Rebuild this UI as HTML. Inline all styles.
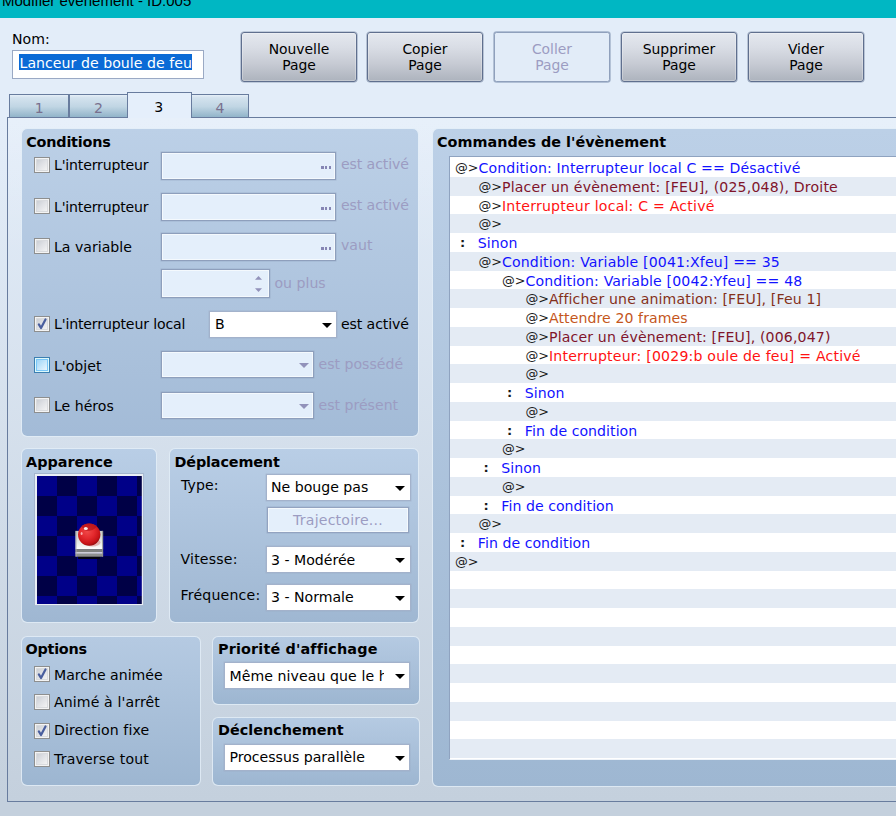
<!DOCTYPE html>
<html lang="fr">
<head>
<meta charset="utf-8">
<title>Modifier évènement - ID:005</title>
<style>
*{box-sizing:border-box;margin:0;padding:0}
html,body{width:896px;height:816px;overflow:hidden}
body{position:relative;font-family:"DejaVu Sans","Liberation Sans",sans-serif;font-size:14.1px;color:#000;
 background:linear-gradient(to bottom,#e3edf9 0px,#e3edf9 120px,#c4d0dd 800px,#c4d0dd 816px);}
.abs{position:absolute}
.t{position:absolute;white-space:nowrap;line-height:16px;height:16px}
.b{font-weight:bold;font-size:14.4px}
.dis{color:#9c9cc2}
#title{left:0;top:0;width:896px;height:17.5px;background:#00b7c3;overflow:hidden}
#title span{position:absolute;left:2px;top:-7.6px;font-family:"Liberation Sans",sans-serif;font-size:15px;line-height:18px;color:#000;white-space:nowrap}
/* name input */
#name{left:12px;top:50px;width:192px;height:29px;background:#fff;border:1px solid #9aa9c4}
#sel{left:19px;top:54px;width:173.4px;height:16px;background:#0a6ad6}
/* buttons */
.btn{position:absolute;top:32px;width:116px;height:50px;border:1px solid #5f6f8e;border-radius:3px;box-shadow:0 0 0 .6px rgba(95,111,142,.55),inset 0 0 0 1px rgba(255,255,255,.28);font-size:13.9px;
 background:linear-gradient(to bottom,#e4e8ef 0%,#d9dde5 30%,#c6cad3 65%,#adb3bd 100%);text-align:center;line-height:16.5px;padding-top:7.6px}
.btn.off{background:#e2ecf8;border-color:#8fa0bc;color:#9c9cc2;box-shadow:0 0 0 .7px rgba(143,160,188,.8);border-radius:2.5px}
/* tabs */
.tab{position:absolute;top:94.1px;height:23.5px;border:1.5px solid #687c9e;border-bottom:none;
 background:linear-gradient(to bottom,#e6eff8 0%,#d3e2ee 12%,#c1d6e4 50%,#8db1c7 100%);text-align:center;line-height:20px;color:#78708e;padding-top:2.7px}
.tab.on{top:91.9px;height:26.6px;background:#e5effb;color:#000;padding-top:4.1px;z-index:3;border-width:1.3px}
#panel{left:7px;top:116.9px;width:910px;height:685.5px;border:1.25px solid #687c9e;z-index:2;
 background:linear-gradient(to bottom,rgba(255,255,255,.16) 0,rgba(255,255,255,0) 140px)}
/* group boxes */
.grp{position:absolute;border-radius:6px;background:linear-gradient(to bottom,var(--a,#bcd0e7),var(--b,#9fb7d2));background-clip:padding-box;border:1.25px solid rgba(226,237,248,.8);z-index:4}
.g2{--a:#b9cee6;--b:#9fb7d2}.g3{--a:#b5cae2;--b:#9db6d1}.g1{--a:#bcd0e7;--b:#a3bbd7}.g4{--a:#bcd0e7;--b:#9eb7d2}
.z{z-index:5}
/* fields */
.fld{position:absolute;background:#e4effb;border:1px solid #8e9fbc;box-shadow:0 0 0 .5px rgba(142,159,188,.5),inset 0 0 0 1px rgba(255,255,255,.6);z-index:5}
.fld.w{background:#fff;border-color:#a3b2cb;box-shadow:0 0 0 .5px rgba(150,166,193,.4)}
.arr{position:absolute;width:0;height:0;border-left:5px solid transparent;border-right:5px solid transparent;border-top:5.5px solid #000}
.arr.d{border-top-color:#9292ba}
.dots{position:absolute;width:10px;height:2.5px}
.dots i{position:absolute;top:0;width:2.5px;height:2.5px;background:#8686b4}
/* checkboxes */
.cb{position:absolute;width:16.25px;height:16.25px;border:1.25px solid #8e8f8f;background:#f4f4f4;z-index:5}
.cb:before{content:"";position:absolute;left:1.25px;top:1.25px;right:1.25px;bottom:1.25px;
 background:linear-gradient(135deg,#cbcfd5 0%,#dfe1e5 45%,#f3f3f3 100%);border:1px solid #d9dbde}
.cb.hot{border-color:#3c7fb1;background:#def9fa}
.cb.hot:before{background:linear-gradient(135deg,#9fd5f7 0%,#c4e6fb 50%,#e9f6fe 100%);border-color:#79c6f9}
.cb svg{position:absolute;left:0;top:0;width:13.75px;height:13.75px}
/* list */
#list{left:449px;top:156px;width:460px;height:604px;background:#fff;border:1px solid #8fa3c0;border-bottom-color:#eef3f9;overflow:hidden;z-index:5}
.r{position:absolute;left:0;width:460px;height:18.75px;white-space:nowrap;line-height:18.75px}
.r.s{background:#e4ebf4}
.r span{position:absolute;top:1px}
.c0{color:#1a1a1a}.at{font-size:12.8px}.r .b{font-size:13px}.blue{color:#1212ff}.mar{color:#80142a}.mar2{color:#84301a}.red{color:#ff1212}.org{color:#c4561c}
</style>
</head>
<body>
<div id="title" class="abs"><span>Modifier évènement - ID:005</span></div>

<div class="t" style="left:12px;top:30.5px">Nom:</div>
<div id="name" class="abs"></div>
<div id="sel" class="abs"></div>
<div class="t" style="left:19.5px;top:54.8px;color:#fff;letter-spacing:.05px">Lanceur de boule de feu</div>

<div class="btn" style="left:241px">Nouvelle<br>Page</div>
<div class="btn" style="left:367px">Copier<br>Page</div>
<div class="btn off" style="left:494px">Coller<br>Page</div>
<div class="btn" style="left:621px">Supprimer<br>Page</div>
<div class="btn" style="left:748px">Vider<br>Page</div>

<div class="tab" style="left:9.1px;width:60.1px">1</div>
<div class="tab" style="left:69.1px;width:59px">2</div>
<div class="tab" style="left:190.6px;width:58.8px">4</div>
<div class="tab on" style="left:127px;width:64.9px;text-indent:-1.5px">3</div>
<div id="panel" class="abs"></div>

<!-- Conditions -->
<div class="grp g1" style="left:20.75px;top:128.25px;width:398.5px;height:308.5px"></div>
<div class="t b z" style="left:26.2px;top:133.7px;letter-spacing:-.2px">Conditions</div>

<div class="cb" style="left:34px;top:157px"></div>
<div class="t z" style="left:54px;top:157.4px;letter-spacing:-.18px">L'interrupteur</div>
<div class="fld" style="left:161px;top:152px;width:174.5px;height:28px"></div>
<div class="dots z" style="left:321px;top:166px"><i style="left:0"></i><i style="left:3.75px"></i><i style="left:7.5px"></i></div>
<div class="t z dis" style="left:341px;top:155.7px;letter-spacing:-.1px">est activé</div>

<div class="cb" style="left:34px;top:198px"></div>
<div class="t z" style="left:54px;top:198.5px;letter-spacing:-.18px">L'interrupteur</div>
<div class="fld" style="left:161px;top:193px;width:174.5px;height:28px"></div>
<div class="dots z" style="left:321px;top:207px"><i style="left:0"></i><i style="left:3.75px"></i><i style="left:7.5px"></i></div>
<div class="t z dis" style="left:341px;top:197.1px;letter-spacing:-.1px">est activé</div>

<div class="cb" style="left:34px;top:238px"></div>
<div class="t z" style="left:54px;top:238.5px">La variable</div>
<div class="fld" style="left:161px;top:233px;width:174.5px;height:28px"></div>
<div class="dots z" style="left:321px;top:247px"><i style="left:0"></i><i style="left:3.75px"></i><i style="left:7.5px"></i></div>
<div class="t z dis" style="left:341px;top:237.1px">vaut</div>

<div class="fld" style="left:161px;top:269px;width:109px;height:28.5px"></div>
<svg class="abs z" style="left:254px;top:274px" width="9" height="20" viewBox="0 0 9 20"><path d="M1 5.8 L4.5 2.0 L8 5.8Z" fill="#9292ba"/><path d="M1 14.2 L4.5 18 L8 14.2Z" fill="#9292ba"/></svg>
<div class="t z dis" style="left:274.5px;top:274.8px">ou plus</div>

<div class="cb" style="left:34px;top:315.5px"><svg viewBox="0 0 11 11"><path d="M3.1 5.9 L4.8 8.8 L8.4 2" fill="none" stroke="#4a5f9e" stroke-width="1.8" stroke-linecap="round" stroke-linejoin="round"/></svg></div>
<div class="t z" style="left:54px;top:316px;letter-spacing:-.15px">L'interrupteur local</div>
<div class="fld w" style="left:209px;top:311px;width:127.5px;height:26.5px"></div>
<div class="t z" style="left:215px;top:316px">B</div>
<div class="arr z" style="left:321.5px;top:322.5px"></div>
<div class="t z" style="left:341px;top:315.6px;letter-spacing:-.1px">est activé</div>

<div class="cb hot" style="left:34px;top:357px"></div>
<div class="t z" style="left:54px;top:357.6px">L'objet</div>
<div class="fld" style="left:161px;top:351px;width:152.5px;height:26.5px"></div>
<div class="arr d z" style="left:298.5px;top:362.8px"></div>
<div class="t z dis" style="left:318.5px;top:356.3px">est possédé</div>

<div class="cb" style="left:34px;top:397px"></div>
<div class="t z" style="left:54px;top:397.7px">Le héros</div>
<div class="fld" style="left:161px;top:392px;width:152.5px;height:26.5px"></div>
<div class="arr d z" style="left:298.5px;top:403.6px"></div>
<div class="t z dis" style="left:318.5px;top:396.5px">est présent</div>

<!-- Apparence -->
<div class="grp g2" style="left:20.75px;top:447.75px;width:136.5px;height:175.5px"></div>
<div class="t b z" style="left:26px;top:453.7px">Apparence</div>
<div class="abs z" style="left:34.1px;top:473.3px;width:109.6px;height:133px;background:#e9eef5;border:1px solid #a3b5ce;border-right-color:#a9bbd3;border-bottom-color:#a9bbd3"></div>
<svg class="abs z" style="left:36.9px;top:475.8px" width="104.8" height="128.2" viewBox="0 0 104.8 128.2">
 <defs><pattern id="chk" width="40" height="40" patternUnits="userSpaceOnUse">
  <rect width="40" height="40" fill="#000046"/><rect width="20" height="20" fill="#000088"/><rect x="20" y="20" width="20" height="20" fill="#000088"/></pattern>
  <radialGradient id="ball" cx="42%" cy="36%" r="68%"><stop offset="0" stop-color="#f04848"/><stop offset=".45" stop-color="#e42a2e"/><stop offset=".8" stop-color="#c81418"/><stop offset="1" stop-color="#8c0a0c"/></radialGradient>
  <linearGradient id="ped" x1="0" y1="0" x2="0" y2="1"><stop offset="0" stop-color="#c9cbc9"/><stop offset=".5" stop-color="#dfe3df"/><stop offset=".85" stop-color="#f4f6f4"/><stop offset="1" stop-color="#ffffff"/></linearGradient>
 </defs>
 <rect width="104.8" height="128.2" fill="url(#chk)"/>
 <rect x="41.1" y="79.6" width="21.8" height="3.4" fill="#05050f"/>
 <rect x="38.5" y="54.9" width="27.6" height="18.4" fill="url(#ped)"/>
 <rect x="38.5" y="73.1" width="27.6" height="3.3" fill="#7f817f"/>
 <rect x="38.5" y="76.2" width="27.6" height="1.6" fill="#f3f3f3"/>
 <rect x="38.5" y="77.7" width="27.6" height="3" fill="#8f918f"/>
 <rect x="38.5" y="54.9" width="1.1" height="25.8" fill="#a9aaa9" opacity=".8"/>
 <rect x="65" y="54.9" width="1.1" height="25.8" fill="#8f908f" opacity=".8"/>
 <ellipse cx="55.5" cy="66.5" rx="8" ry="4" fill="#d86a6a" opacity=".45"/>
 <circle cx="52.2" cy="58.6" r="11.2" fill="url(#ball)"/>
 <path d="M44.5 50 Q52 44.5 60 50.5 Q56 55 50 55 Q46 54 44.5 50Z" fill="#a80c10" opacity=".55"/>
 <ellipse cx="48.8" cy="52.4" rx="2" ry="1.5" fill="#ffffff" opacity=".92"/>
 <ellipse cx="44.6" cy="57.6" rx="1" ry="1.5" fill="#ffd0d0" opacity=".8"/>
</svg>

<!-- Déplacement -->
<div class="grp g2" style="left:169px;top:447.75px;width:250.25px;height:175.5px"></div>
<div class="t b z" style="left:174.5px;top:453.7px;letter-spacing:-.15px">Déplacement</div>
<div class="t z" style="left:181px;top:477.2px;letter-spacing:.1px">Type:</div>
<div class="fld w" style="left:265.5px;top:473.5px;width:145px;height:27px"></div>
<div class="t z" style="left:271px;top:478.6px">Ne bouge pas</div>
<div class="arr z" style="left:394.5px;top:485.5px"></div>
<div class="fld" style="left:267px;top:507px;width:142px;height:26px;border-color:#93a3c0"></div>
<div class="t z dis" style="left:267px;top:511.5px;width:142px;text-align:center;letter-spacing:.2px">Trajectoire...</div>
<div class="t z" style="left:180.5px;top:551px;letter-spacing:.2px">Vitesse:</div>
<div class="fld w" style="left:265.5px;top:546px;width:145px;height:27px"></div>
<div class="t z" style="left:271px;top:551.5px">3 - Modérée</div>
<div class="arr z" style="left:394.5px;top:558px"></div>
<div class="t z" style="left:180.5px;top:587px;letter-spacing:.2px">Fréquence:</div>
<div class="fld w" style="left:265.5px;top:583.5px;width:145px;height:27px"></div>
<div class="t z" style="left:271px;top:589px">3 - Normale</div>
<div class="arr z" style="left:394.5px;top:595.5px"></div>

<!-- Options -->
<div class="grp g3" style="left:20.75px;top:635.6px;width:180.25px;height:150.6px"></div>
<div class="t b z" style="left:25.5px;top:641px;letter-spacing:-.25px">Options</div>
<div class="cb" style="left:34px;top:665.75px"><svg viewBox="0 0 11 11"><path d="M3.1 5.9 L4.8 8.8 L8.4 2" fill="none" stroke="#4a5f9e" stroke-width="1.8" stroke-linecap="round" stroke-linejoin="round"/></svg></div>
<div class="t z" style="left:54px;top:666.5px">Marche animée</div>
<div class="cb" style="left:34px;top:694px"></div>
<div class="t z" style="left:54px;top:693.6px;letter-spacing:.12px">Animé à l'arrêt</div>
<div class="cb" style="left:34px;top:722.5px"><svg viewBox="0 0 11 11"><path d="M3.1 5.9 L4.8 8.8 L8.4 2" fill="none" stroke="#4a5f9e" stroke-width="1.8" stroke-linecap="round" stroke-linejoin="round"/></svg></div>
<div class="t z" style="left:54px;top:722.4px;letter-spacing:.12px">Direction fixe</div>
<div class="cb" style="left:34px;top:750.5px"></div>
<div class="t z" style="left:54px;top:751px;letter-spacing:.16px">Traverse tout</div>

<!-- Priorité -->
<div class="grp g3" style="left:212.25px;top:635.6px;width:207.5px;height:69.2px"></div>
<div class="t b z" style="left:218px;top:640.5px;letter-spacing:.15px">Priorité d'affichage</div>
<div class="fld w" style="left:224px;top:662px;width:186px;height:26.5px"></div>
<div class="t z" style="left:229.5px;top:667.5px;width:154.8px;overflow:hidden;letter-spacing:.08px">Même niveau que le héros</div>
<div class="arr z" style="left:394.5px;top:674px"></div>

<!-- Déclenchement -->
<div class="grp g3" style="left:212.25px;top:716.75px;width:207.5px;height:69.5px"></div>
<div class="t b z" style="left:218px;top:722px">Déclenchement</div>
<div class="fld w" style="left:224px;top:744px;width:186px;height:26.5px"></div>
<div class="t z" style="left:229.5px;top:749px">Processus parallèle</div>
<div class="arr z" style="left:394.5px;top:755.5px"></div>

<!-- Commandes -->
<div class="grp g4" style="left:431.75px;top:128.25px;width:480px;height:658.5px"></div>
<div class="t b z" style="left:437px;top:133.5px">Commandes de l'évènement</div>
<div id="list" class="abs">
<div class="r" style="top:1.00px"><span class="c0 at" style="left:5.00px">@&gt;</span><span class="blue" style="left:28.50px;letter-spacing:0.140px">Condition: Interrupteur local C == Désactivé</span></div>
<div class="r s" style="top:19.75px"><span class="c0 at" style="left:28.50px">@&gt;</span><span class="mar" style="left:52.00px;letter-spacing:0.175px">Placer un évènement: [FEU], (025,048), Droite</span></div>
<div class="r" style="top:38.50px"><span class="c0 at" style="left:28.50px">@&gt;</span><span class="red" style="left:52.00px;letter-spacing:0.215px">Interrupteur local: C = Activé</span></div>
<div class="r s" style="top:57.25px"><span class="c0 at" style="left:28.50px">@&gt;</span></div>
<div class="r" style="top:76.00px"><span class="c0 b" style="left:10.00px">:</span><span class="blue" style="left:27.80px;letter-spacing:0.050px">Sinon</span></div>
<div class="r s" style="top:94.75px"><span class="c0 at" style="left:28.50px">@&gt;</span><span class="blue" style="left:52.00px;letter-spacing:0.150px">Condition: Variable [0041:Xfeu] == 35</span></div>
<div class="r" style="top:113.50px"><span class="c0 at" style="left:52.00px">@&gt;</span><span class="blue" style="left:75.50px;letter-spacing:0.150px">Condition: Variable [0042:Yfeu] == 48</span></div>
<div class="r s" style="top:132.25px"><span class="c0 at" style="left:75.50px">@&gt;</span><span class="mar2" style="left:99.00px;letter-spacing:0.155px">Afficher une animation: [FEU], [Feu 1]</span></div>
<div class="r" style="top:151.00px"><span class="c0 at" style="left:75.50px">@&gt;</span><span class="org" style="left:99.00px;letter-spacing:0.090px">Attendre 20 frames</span></div>
<div class="r s" style="top:169.75px"><span class="c0 at" style="left:75.50px">@&gt;</span><span class="mar" style="left:99.00px;letter-spacing:0.150px">Placer un évènement: [FEU], (006,047)</span></div>
<div class="r" style="top:188.50px"><span class="c0 at" style="left:75.50px">@&gt;</span><span class="red" style="left:99.00px;letter-spacing:0.200px">Interrupteur: [0029:b oule de feu] = Activé</span></div>
<div class="r s" style="top:207.25px"><span class="c0 at" style="left:75.50px">@&gt;</span></div>
<div class="r" style="top:226.00px"><span class="c0 b" style="left:57.00px">:</span><span class="blue" style="left:74.80px;letter-spacing:0.050px">Sinon</span></div>
<div class="r s" style="top:244.75px"><span class="c0 at" style="left:75.50px">@&gt;</span></div>
<div class="r" style="top:263.50px"><span class="c0 b" style="left:57.00px">:</span><span class="blue" style="left:74.80px;letter-spacing:0.050px">Fin de condition</span></div>
<div class="r s" style="top:282.25px"><span class="c0 at" style="left:52.00px">@&gt;</span></div>
<div class="r" style="top:301.00px"><span class="c0 b" style="left:33.50px">:</span><span class="blue" style="left:51.30px;letter-spacing:0.050px">Sinon</span></div>
<div class="r s" style="top:319.75px"><span class="c0 at" style="left:52.00px">@&gt;</span></div>
<div class="r" style="top:338.50px"><span class="c0 b" style="left:33.50px">:</span><span class="blue" style="left:51.30px;letter-spacing:0.050px">Fin de condition</span></div>
<div class="r s" style="top:357.25px"><span class="c0 at" style="left:28.50px">@&gt;</span></div>
<div class="r" style="top:376.00px"><span class="c0 b" style="left:10.00px">:</span><span class="blue" style="left:27.80px;letter-spacing:0.050px">Fin de condition</span></div>
<div class="r s" style="top:394.75px"><span class="c0 at" style="left:5.00px">@&gt;</span></div>
<div class="r" style="top:413.50px"></div>
<div class="r s" style="top:432.25px"></div>
<div class="r" style="top:451.00px"></div>
<div class="r s" style="top:469.75px"></div>
<div class="r" style="top:488.50px"></div>
<div class="r s" style="top:507.25px"></div>
<div class="r" style="top:526.00px"></div>
<div class="r s" style="top:544.75px"></div>
<div class="r" style="top:563.50px"></div>
<div class="r s" style="top:582.25px"></div>
</div>
</body>
</html>
